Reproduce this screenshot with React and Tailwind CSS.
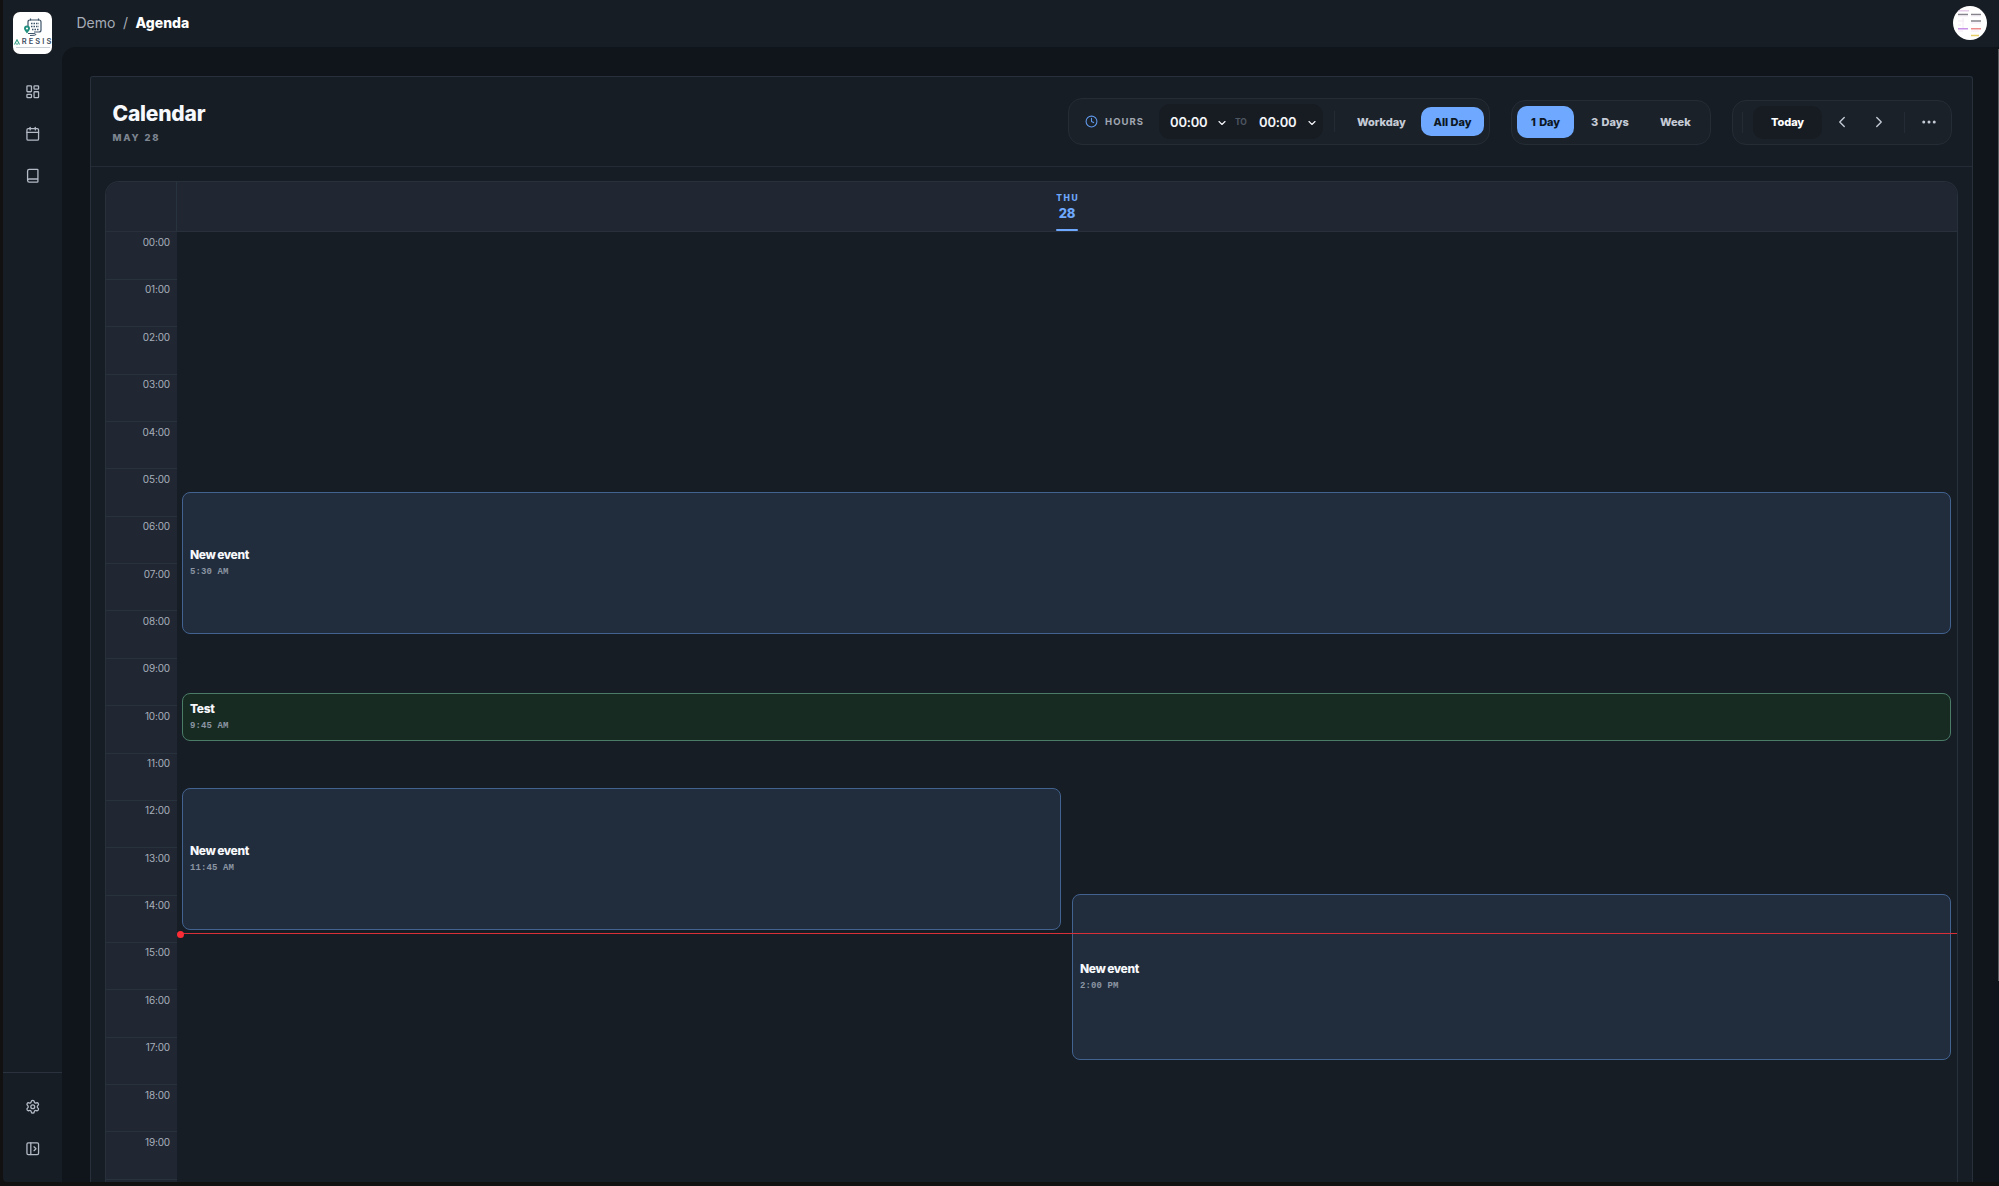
import React from "react";
import {
  LayoutDashboard,
  Calendar,
  Book,
  Settings,
  PanelLeftOpen,
  Clock,
  ChevronDown,
  ChevronLeft,
  ChevronRight,
  Ellipsis,
} from "lucide-react";

const ROW = 47.37;
const HOURS = Array.from({ length: 20 }, (_, h) => String(h).padStart(2, "0") + ":00");

const EVENTS = [
  { title: "New event", time: "5:30 AM", top: 260, height: 142, left: 5, width: 1769, tone: "blue" },
  { title: "Test", time: "9:45 AM", top: 461, height: 48, left: 5, width: 1769, tone: "green" },
  { title: "New event", time: "11:45 AM", top: 556, height: 142, left: 5, width: 879, tone: "blue" },
  { title: "New event", time: "2:00 PM", top: 662, height: 166, left: 895, width: 879, tone: "blue" },
];

const TONES = {
  blue: "border-[#42628f] bg-[#212d3d]",
  green: "border-[#4b7c68] bg-[#182b22]",
};

function Logo() {
  return (
    <div className="flex h-[42px] w-[39px] flex-col items-center overflow-hidden rounded-[7px] bg-white pt-[6px]">
      <svg width="20" height="19" viewBox="0 0 20 19" fill="none">
        <path d="M5 8V4q0-2 2-2h9q2 0 2 2v8q0 2-2 2h-5" stroke="#3d5368" strokeWidth="1.2" />
        <path d="M7.500 0.500v2M15.500 0.500v2" stroke="#3d5368" strokeWidth="1.200" />
        <path d="M8 5.500h8M8 8.500h8M9 11.500h7" stroke="#3d5368" strokeWidth="1.600" strokeDasharray="1.500 1" />
        <path d="M5 15.500h5q3 0 3 1t-6 1" stroke="#3d5368" strokeWidth="1" />
        <path d="M4 15.500C2.500 13 1 12 1 10.500a3 3 0 0 1 6 0C7 12 5.500 13 4 15.500z" fill="#23907f" />
        <circle cx="4" cy="10.500" r="1.100" fill="#fff" />
      </svg>
      <div className="mt-px flex w-[38px] items-center justify-between text-[7.500px] font-semibold leading-[8px] text-[#3d4e60]">
        <svg width="6" height="6" viewBox="0 0 6 6" fill="none">
          <path d="M0.500 5.500L3 0.800L5.500 5.500M2 5h2" stroke="#2f9c83" strokeWidth="1.100" />
        </svg>
        <span>R</span>
        <span>E</span>
        <span>S</span>
        <span>I</span>
        <span>S</span>
      </div>
      <div className="mt-px h-px w-[34px] bg-[#c9d0d6]" />
    </div>
  );
}

function Avatar() {
  return (
    <svg width="34" height="34" viewBox="0 0 34 34" className="mr-[12px] rounded-full bg-white">
      <rect x="5" y="4" width="11" height="1.500" fill="#e6cdea" />
      <path d="M5 8.500h10M18 8.500h10M18 15h10" stroke="#85848c" strokeWidth="1.500" />
      <path d="M5 10h10M18 10h10M5 15h6M18 17h10M5 19h3M10 12v12M5 25h5M18 25h8" stroke="#f1e3f2" strokeWidth="0.800" />
      <path d="M5 22.800h10" stroke="#c792e8" strokeWidth="1.500" />
      <path d="M18 22.800h10" stroke="#ee8c8c" strokeWidth="1.500" />
      <path d="M18 29.500h8" stroke="#e8cf6a" strokeWidth="1.500" />
    </svg>
  );
}

function Sidebar() {
  return (
    <aside className="flex w-[59px] shrink-0 flex-col items-center rounded-bl-[4px] bg-[#171d24] pt-[12px] text-[#b4bac6]">
      <Logo />
      <nav className="mt-[30px] flex flex-col items-center gap-[26.500px]">
        <LayoutDashboard size={15.5} strokeWidth={2} />
        <Calendar size={15.5} strokeWidth={2} />
        <Book size={15.5} strokeWidth={2} />
      </nav>
      <div className="mt-auto flex h-[110px] w-full flex-col items-center gap-[26.500px] border-t border-[#2a323e] pt-[26px]">
        <Settings size={15.5} strokeWidth={2} />
        <PanelLeftOpen size={15.5} strokeWidth={2} />
      </div>
    </aside>
  );
}

function Toolbar() {
  return (
    <div className="mt-px flex items-center text-[11px] font-extrabold tracking-[-0.050px] text-[#c5cbd6]">
      <div className="-mt-px flex h-[47px] w-[422px] items-center rounded-[14px] border border-[#242c36] bg-[#1b2128]">
        <Clock size={13} strokeWidth={2} className="ml-[16px] text-[#5f98ea]" />
        <span className="ml-[7px] w-[54px] pt-px text-[9.500px] font-bold tracking-[1.050px] text-[#a0a7b2]">HOURS</span>
        <div className="flex h-[35px] w-[164px] items-center rounded-[11px] bg-[#171c23] pl-[11px] pt-[2px] text-[13px] font-semibold tracking-[-0.200px] text-[#f3f5f8]">
          <span className="w-[46px]">00:00</span>
          <ChevronDown size={12} strokeWidth={2.300} />
          <span className="ml-[7px] w-[24px] text-[8.500px] font-bold text-[#4e5661]">TO</span>
          <span className="w-[47px]">00:00</span>
          <ChevronDown size={12} strokeWidth={2.300} />
        </div>
        <div className="ml-[11px] h-[21px] w-px bg-[#242b34]" />
        <span className="ml-[22px] w-[64px] pt-px">Workday</span>
        <div className="flex h-[29px] w-[63px] items-center justify-center rounded-[10px] bg-[#6ea8ff] pt-px text-[#0d1724]">All Day</div>
      </div>
      <div className="ml-[21px] flex h-[45px] w-[200px] items-center rounded-[14px] border border-[#242c36] bg-[#1b2128] pl-[5px]">
        <div className="flex h-[32px] w-[57px] items-center justify-center rounded-[10px] bg-[#6ea8ff] text-[#0d1724] [word-spacing:1px]">1 Day</div>
        <span className="ml-[17px] w-[69px] [word-spacing:1px]">3 Days</span>
        <span>Week</span>
      </div>
      <div className="ml-[21px] flex h-[45px] w-[220px] items-center rounded-[14px] border border-[#242c36] bg-[#1b2128]">
        <div className="ml-[9px] h-[21px] w-px bg-[#242b34]" />
        <div className="ml-[10px] flex h-[33px] w-[69px] items-center justify-center rounded-[10px] bg-[#171c23] text-white">Today</div>
        <ChevronLeft size={18} strokeWidth={1.800} className="ml-[11px]" />
        <ChevronRight size={18} strokeWidth={1.800} className="ml-[19px]" />
        <div className="ml-[16px] h-[21px] w-px bg-[#242b34]" />
        <Ellipsis size={18} strokeWidth={2} className="ml-[15px]" />
      </div>
    </div>
  );
}

function EventCard({ event }) {
  return (
    <div
      className={`absolute flex flex-col justify-center overflow-hidden rounded-[8px] border pl-[7px] ${TONES[event.tone]}`}
      style={{ top: event.top, left: event.left, width: event.width, height: event.height }}
    >
      <div className="text-[12px] font-extrabold leading-[16px] tracking-[-0.370px] text-[#f6f8fb] [word-spacing:-0.600px]">{event.title}</div>
      <div className="mt-px font-['Liberation_Mono',monospace] text-[9px] font-bold leading-[16px] tracking-[0.100px] text-[#8b95a3]">{event.time}</div>
    </div>
  );
}

function Schedule() {
  return (
    <div className="ml-[14px] mt-[14px] flex w-[1853px] flex-1 flex-col overflow-hidden rounded-t-[14px] border border-b-0 border-[#27303b]">
      <div className="flex h-[50px] shrink-0 border-b border-[#27303b] bg-[#202732]">
        <div className="w-[71px] border-r border-[#27343f]" />
        <div className="flex flex-1 flex-col items-center pt-[11px] text-[#6ea8ff]">
          <div className="pl-[1.500px] text-[8.500px] font-extrabold leading-[10px] tracking-[1.600px]">THU</div>
          <div className="mt-[2px] text-[13px] font-extrabold leading-[16px] tracking-[-0.200px]">28</div>
          <div className="mt-auto h-[2px] w-[22px] rounded-full bg-[#6ea8ff]" />
        </div>
      </div>
      <div className="flex min-h-0 flex-1 overflow-hidden">
        <div className="w-[71px] shrink-0 bg-[#202732] pt-[0.600px]">
          {HOURS.map((hour) => (
            <div
              key={hour}
              className="border-b border-[#27323d] pr-[7px] pt-[2.500px] text-right text-[10px] leading-[14px] tracking-[-0.150px] text-[#a8afbb]"
              style={{ height: ROW }}
            >
              {hour}
            </div>
          ))}
        </div>
        <div className="relative flex-1 bg-[#171d24]">
          {EVENTS.map((event) => (
            <EventCard key={event.time} event={event} />
          ))}
          <div className="absolute left-[3px] right-0 top-[701px] h-px bg-[#d92f38]" />
          <div className="absolute left-0 top-[699px] h-[7px] w-[7px] rounded-full bg-[#fb2c36]" />
        </div>
      </div>
    </div>
  );
}

export default function App() {
  return (
    <div className="h-[1186px] w-[1999px] overflow-hidden bg-[#111111] pb-[4px] pl-[3px] font-[Inter,sans-serif]">
      <div className="flex h-full">
        <Sidebar />
        <div className="flex min-w-0 flex-1 flex-col bg-[#171d24]">
          <header className="flex h-[47px] shrink-0 items-start justify-between pl-[14.500px] pt-[6px]">
            <div className="flex h-[33px] items-center gap-[7.500px] text-[14px] text-[#a6acb7]">
              <span>Demo</span>
              <span>/</span>
              <span className="font-extrabold text-white">Agenda</span>
            </div>
            <Avatar />
          </header>
          <div className="flex min-h-0 flex-1 rounded-tl-[14px] bg-[#10151b] pl-[29px] pt-[29px]">
            <section className="-ml-px flex w-[1883px] shrink-0 flex-col rounded-t-[3px] border border-b-0 border-[#27303b] bg-[#171d24]">
              <div className="flex h-[90px] shrink-0 items-center justify-between border-b border-[#242b36] pl-[21.500px] pr-[20px]">
                <div className="mt-[2px]">
                  <h1 className="text-[21px] font-extrabold leading-[26px] tracking-[-0.200px] text-[#f6f8fb]">Calendar</h1>
                  <p className="mt-[4px] text-[9.500px] font-extrabold leading-[14px] tracking-[1.800px] text-[#7d8591]">MAY 28</p>
                </div>
                <Toolbar />
              </div>
              <Schedule />
            </section>
            <div className="ml-auto h-[932px] w-px -translate-y-[27px] bg-[#5b5d60]" />
          </div>
        </div>
      </div>
    </div>
  );
}
